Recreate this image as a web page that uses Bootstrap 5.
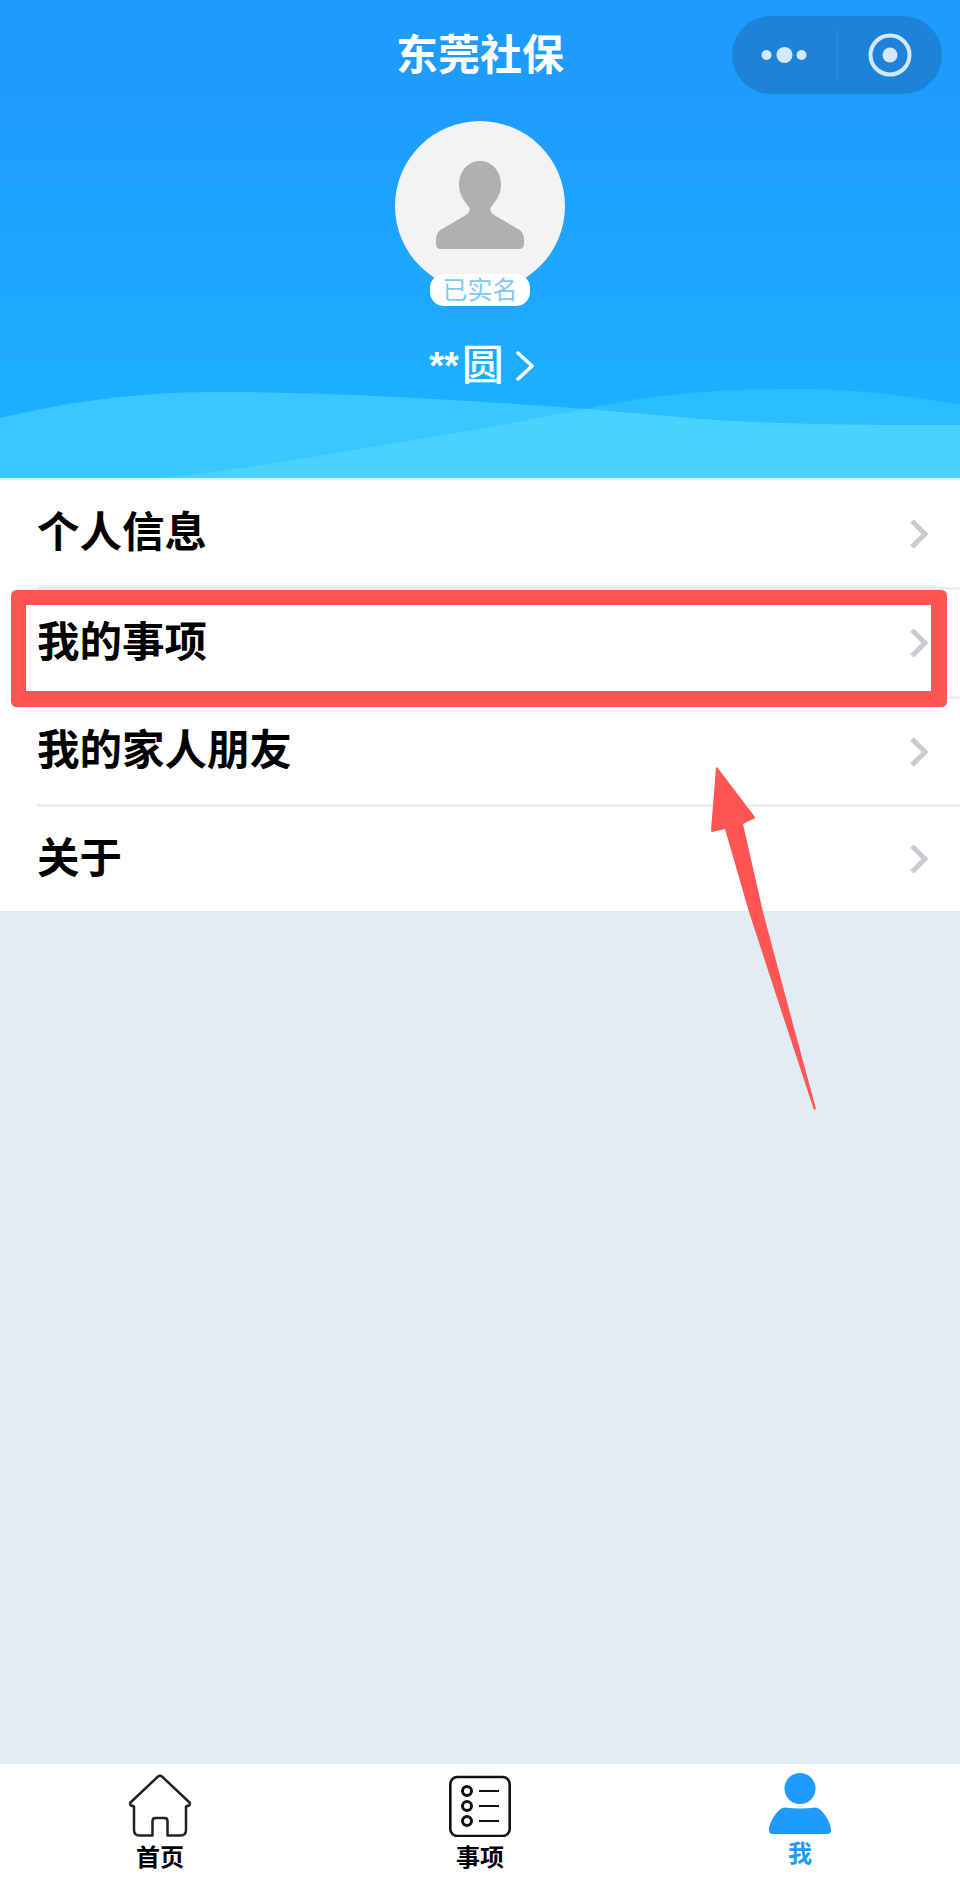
<!DOCTYPE html>
<html lang="zh"><head><meta charset="utf-8"><title>东莞社保</title>
<link href="https://cdn.jsdelivr.net/npm/bootstrap@5.3.0/dist/css/bootstrap.min.css" rel="stylesheet">
<style>
html,body{height:100%;margin:0}
body{background:#e2ecf5;font-family:"Liberation Sans","Noto Sans CJK SC",sans-serif;width:960px;height:1892px;overflow:hidden}
.app{height:1892px;position:relative}
.hero{height:478px;background:linear-gradient(180deg,#1e9bff 0,#1e9bff 90px,#1cb4ff 100%);position:relative;overflow:hidden}
.hero-inner{position:relative;z-index:1}
.topbar{display:grid;grid-template-columns:1fr auto 1fr;align-items:center;height:78px;margin-top:15px;padding:0 18px}
.topbar-title{grid-column:2;color:#fff;font-size:42px;font-weight:700;line-height:78px;align-self:start;padding-top:2px}
.capsule{grid-column:3;justify-self:end;width:210px;height:78px;border-radius:39px;background:#1c83d9;padding:14px 0}
.capsule-part{flex:1 1 0}
.capsule-part+.capsule-part{border-left:1px solid #2a8fe2}
.avatar{width:170px;height:170px;border-radius:50%;background:#f3f3f6;margin-top:28px}
.real-badge{width:100px;height:32px;margin-top:-17px;border-radius:14px;background:#fff;color:#83c8f3;font-size:25px;line-height:32px;position:relative}
.uname{color:#fff;font-size:42px;line-height:46px;font-weight:500;margin-top:37px;margin-left:4px}
.uname-stars{font-size:38px;font-weight:700;margin-right:3px}
.uname-arrow{margin-left:11px}
.waves{position:absolute;left:0;bottom:0;display:block}
.menu{border-radius:0;background:#fff}
.menu .list-group-item{height:108px;padding:0 32px 0 0;margin-left:37px;border:0;border-bottom:3px solid #eeeef2;border-radius:0;background:#fff;font-size:42.500px;font-weight:700;color:#000;line-height:1}
.menu .list-group-item:first-child{height:110px}
.menu .list-group-item:nth-child(2){height:109px}
.menu .list-group-item:last-child{border-bottom:0;height:104px}
.menu-wrap{background:#fff;border-top:2px solid #e6eef5}
.gap-fill{height:853px}
.tabbar{height:128px;background:#fff}
.tab{width:320px;font-size:24px;font-weight:700;color:#000;line-height:1;padding-top:9px}
.tab svg{display:block;margin-bottom:9px}
.tab-active{color:#1e9bff}
.tab-active svg{margin-bottom:5px}
.mark-layer{position:absolute;left:0;top:0;pointer-events:none}
</style></head>
<body><div class="app">
<header class="hero">
<svg class="waves" width="960" height="100" viewBox="0 378 960 100">
<defs>
<clipPath id="w2clip"><path d="M160 478C260 468 380 445 480 429C520 422 545 416 570 412C610 405 660 389 797 389C860 389 910 396 960 405V478Z"/></clipPath>
</defs>
<path fill="#2abdff" d="M160 478C260 468 380 445 480 429C520 422 545 416 570 412C610 405 660 389 797 389C860 389 910 396 960 405V478Z"/>
<path fill="#38c8ff" d="M0 418C60 404 130 392 215 392C320 392 420 398 500 403C580 408 620 412 700 419C780 425 880 425 960 425V478H0Z"/>
<path fill="#4ad2ff" clip-path="url(#w2clip)" d="M0 418C60 404 130 392 215 392C320 392 420 398 500 403C580 408 620 412 700 419C780 425 880 425 960 425V478H0Z"/>
</svg>
<div class="hero-inner d-flex flex-column align-items-center">
<div class="topbar w-100">
<div class="topbar-title">东莞社保</div>
<div class="capsule d-flex">
<div class="capsule-part d-flex align-items-center justify-content-center">
<svg width="52" height="20" viewBox="0 0 52 20"><g fill="#d5e8f9"><circle cx="8.500" cy="10" r="5"/><circle cx="26.500" cy="10" r="8"/><circle cx="43.500" cy="10" r="5"/></g></svg>
</div>
<div class="capsule-part d-flex align-items-center justify-content-center">
<svg width="46" height="46" viewBox="0 0 46 46"><circle cx="23" cy="23" r="19.500" fill="none" stroke="#d5e8f9" stroke-width="4"/><circle cx="23" cy="23" r="7.500" fill="#d5e8f9"/></svg>
</div>
</div>
</div>
<div class="avatar d-flex align-items-center justify-content-center">
<svg width="88" height="90" viewBox="0 0 88 90"><path fill="#b0b0b2" d="M44 0C56 0 65 10 65 24C65 33 60 40 55 46C53 49 55 52 58 54L82 68C86 70 88 74 88 78V83C88 86 86 88 83 88H5C2 88 0 86 0 83V78C0 74 2 70 6 68L30 54C33 52 35 49 33 46C28 40 23 33 23 24C23 10 32 0 44 0Z"/></svg>
</div>
<div class="real-badge text-center">已实名</div>
<div class="uname d-flex align-items-center">
<span class="uname-stars">**</span><span>圆</span>
<svg class="uname-arrow" width="20" height="30" viewBox="0 0 20 30"><path d="M3 2L17 15L3 28" fill="none" stroke="#fff" stroke-width="3.500" stroke-linecap="round" stroke-linejoin="round"/></svg>
</div>
</div>
</header>
<div class="menu-wrap">
<div class="list-group menu">
<div class="list-group-item d-flex align-items-center justify-content-between"><span>个人信息</span><svg width="18" height="28" viewBox="0 0 18 28"><path d="M2 1L15 14L2 27" fill="none" stroke="#c9cbd0" stroke-width="5"/></svg></div>
<div class="list-group-item d-flex align-items-center justify-content-between"><span>我的事项</span><svg width="18" height="28" viewBox="0 0 18 28"><path d="M2 1L15 14L2 27" fill="none" stroke="#c9cbd0" stroke-width="5"/></svg></div>
<div class="list-group-item d-flex align-items-center justify-content-between"><span>我的家人朋友</span><svg width="18" height="28" viewBox="0 0 18 28"><path d="M2 1L15 14L2 27" fill="none" stroke="#c9cbd0" stroke-width="5"/></svg></div>
<div class="list-group-item d-flex align-items-center justify-content-between"><span>关于</span><svg width="18" height="28" viewBox="0 0 18 28"><path d="M2 1L15 14L2 27" fill="none" stroke="#c9cbd0" stroke-width="5"/></svg></div>
</div>
</div>
<div class="gap-fill"></div>
<nav class="tabbar d-flex">
<div class="tab d-flex flex-column align-items-center">
<svg width="64" height="64" viewBox="0 0 64 64"><path d="M30 3.500Q32 2 34 3.500L61.500 29.500Q62.500 31 61 32.500L58 33.500V57Q58 62.500 52.500 62.500H39.500V48Q39.500 45 36.500 45H27.500Q24.500 45 24.500 48V62.500H11.500Q6 62.500 6 57V33.500L3 32.500Q1.500 31 2.500 29.500Z" fill="none" stroke="#222" stroke-width="2.500" stroke-linejoin="round"/></svg>
<span>首页</span></div>
<div class="tab d-flex flex-column align-items-center">
<svg width="64" height="64" viewBox="0 0 64 64"><rect x="2.300" y="4" width="59.400" height="59" rx="7" fill="none" stroke="#111" stroke-width="2.600"/><g fill="none" stroke="#111" stroke-width="3"><circle cx="19" cy="18" r="4.500"/><circle cx="19" cy="33" r="4.500"/><circle cx="19" cy="48" r="4.500"/></g><path d="M31 18H51M31 33H51M31 48H51" stroke="#111" stroke-width="2.200"/></svg>
<span>事项</span></div>
<div class="tab tab-active d-flex flex-column align-items-center">
<svg width="64" height="64" viewBox="0 0 64 64"><circle cx="32" cy="15.500" r="15.500" fill="#1e9bff"/><path d="M16 34.500Q32 36.500 48 34.500C55 36 63 50 63 57Q63 61 59 61H5Q1 61 1 57C1 50 9 36 16 34.500Z" fill="#1e9bff"/></svg>
<span>我</span></div>
</nav>
<svg class="mark-layer" width="960" height="1892" viewBox="0 0 960 1892">
<path fill="#ff5555" fill-rule="evenodd" d="M17 590H941Q947 590 947 596V701Q947 707 941 707H17Q11 707 11 701V596Q11 590 17 590ZM26 605V691H931V605Z"/>
<path fill="#ff5555" d="M716 768L717 767L755 817Q755 819 753 819L743 824L763 912L790 1013L816 1109L814 1110L780 1007L749 912L725 829L712 832Q711 832 711 830Z"/>
</svg>
</div></body></html>
